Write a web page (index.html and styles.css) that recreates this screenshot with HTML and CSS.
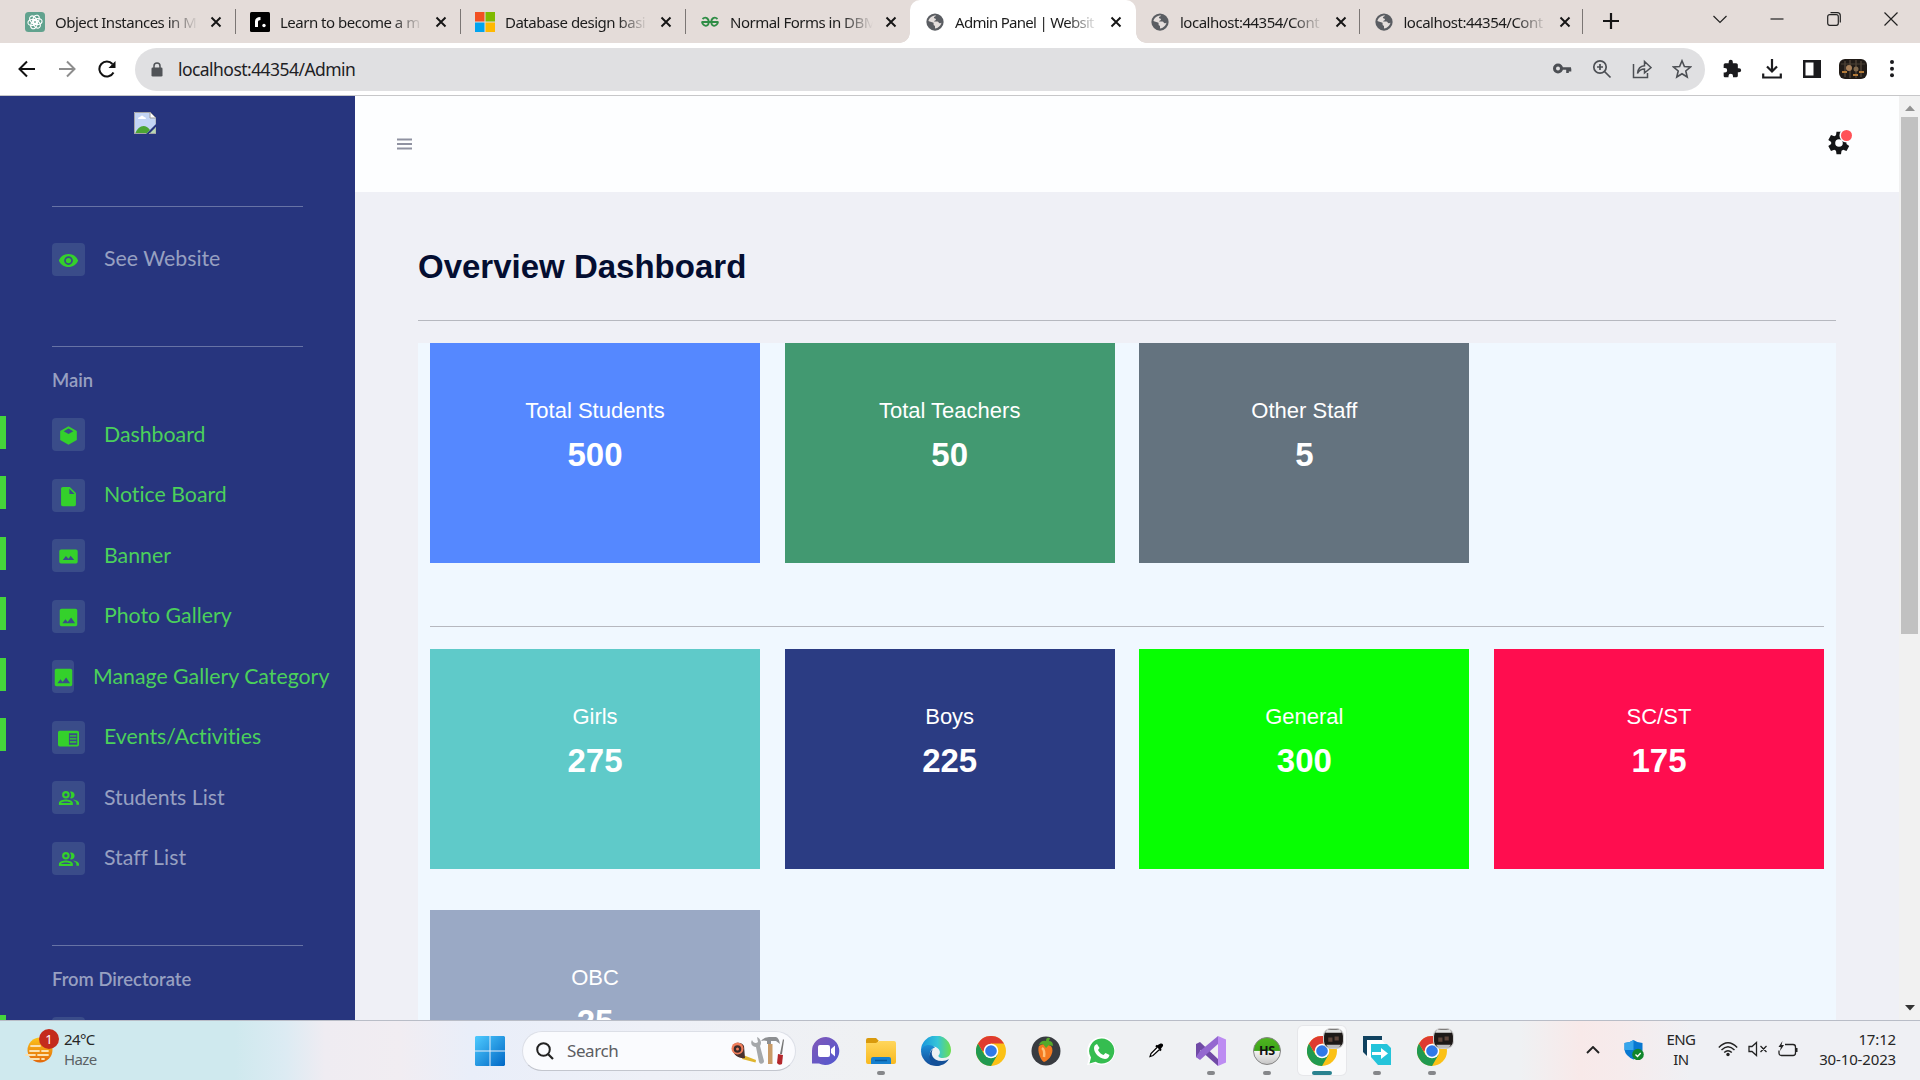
FILE: index.html
```html
<!DOCTYPE html>
<html lang="en">
<head>
<meta charset="utf-8">
<title>Admin Panel | Website</title>
<link rel="stylesheet" href="styles.css">
</head>
<body>
<svg class="defs" aria-hidden="true">
  <defs>
    <linearGradient id="winGrad" x1="0" y1="0" x2="1" y2="1"><stop offset="0" stop-color="#4fcbff"/><stop offset="1" stop-color="#0067c5"/></linearGradient>
    <linearGradient id="chatGrad" x1="0" y1="0" x2="1" y2="1"><stop offset="0" stop-color="#8258b8"/><stop offset="1" stop-color="#5058d0"/></linearGradient>
    <linearGradient id="folderGrad" x1="0" y1="0" x2="0" y2="1"><stop offset="0" stop-color="#ffd65c"/><stop offset="1" stop-color="#f8b91f"/></linearGradient>
    <linearGradient id="edgeTop" x1="0" y1="0" x2="1" y2="0"><stop offset="0" stop-color="#1795dd"/><stop offset=".55" stop-color="#35c5d8"/><stop offset="1" stop-color="#6ee04c"/></linearGradient>
    <linearGradient id="edgeLow" x1="0" y1="0" x2="0" y2="1"><stop offset="0" stop-color="#1c8fd8"/><stop offset="1" stop-color="#124a96"/></linearGradient>
    <linearGradient id="sunGrad" x1="0" y1="0" x2="0" y2="1"><stop offset="0" stop-color="#fcc419"/><stop offset="1" stop-color="#e3680b"/></linearGradient>
    <linearGradient id="hsGrad" x1="0" y1="0" x2="0" y2="1"><stop offset="0" stop-color="#4fb51f"/><stop offset=".48" stop-color="#3da51a"/><stop offset=".5" stop-color="#f4f4f4"/><stop offset="1" stop-color="#c4c4c4"/></linearGradient>
  </defs>
  <symbol id="globe" viewBox="0 0 24 24"><circle cx="12" cy="12" r="11.5" fill="#5a5d62"/><path d="M13.500 3.200c-1 1.600-2.800 1.300-3 2.800 .2 1.700 2.800.6 2.800 2.600 0 1.600-2.600 1.100-2.600 2.800h4.500c1.800 0 1.400 2.700 3.800 2.200l1.600-.6c-.7 3.600-4.400 7.500-8.600 7.500v-2.800c0-1.200-1.900-1-1.900-2.500v-2.300L5 11.400l-1.800-.8C4 6.500 8 3 13.500 3.200z" fill="#e4dedc"/></symbol>
  <symbol id="close" viewBox="0 0 12 12"><path d="M1.500 1.500l9 9M10.500 1.500l-9 9" stroke="#151515" stroke-width="1.900" fill="none"/></symbol>
  <symbol id="image" viewBox="0 0 24 24"><path d="M22 20V4c0-1.100-.9-2-2-2H4c-1.100 0-2 .9-2 2v16c0 1.100.9 2 2 2h16c1.100 0 2-.9 2-2zM8.500 14l2.500 3 4-5 4.500 6.500H5z"/></symbol>
  <symbol id="people" viewBox="0 0 24 24"><path d="M16.500 13.100c2.100 1 4.500 2 4.500 4.400V19h3v-1.700c0-2.600-4.500-3.900-7.500-4.200zM15 12c2.200 0 4-1.800 4-4s-1.800-4-4-4c-.5 0-.9.1-1.300.2A6 6 0 0 1 15 8a6 6 0 0 1-1.300 3.800c.4.100.8.200 1.300.2zM9 3.500a4.300 4.300 0 1 0 0 8.600 4.300 4.300 0 0 0 0-8.600zm0 6.200A1.900 1.900 0 1 1 9 5.900a1.900 1.900 0 0 1 0 3.800zM9 13c-2.700 0-8 1.300-8 4v2.500h16V17c0-2.700-5.300-4-8-4zm5.500 4h-11c.5-.7 3-1.500 5.500-1.500s5 .8 5.500 1.500z"/></symbol>
  <symbol id="chrome" viewBox="0 0 30 30"><circle cx="15" cy="15" r="15" fill="#fbc116"/><path d="M2 7.500A15 15 0 0 0 15 30l6.500-11.250L15 15 8.500 18.750z" fill="#219a50"/><path d="M2 7.500A15 15 0 0 1 28 7.500H15V15H6.500z" fill="#df3b30"/><circle cx="15" cy="15" r="7.300" fill="#fff"/><circle cx="15" cy="15" r="5.800" fill="#3079e8"/></symbol>
  <symbol id="avatar" viewBox="0 0 28 20"><rect width="28" height="20" rx="6" fill="#211b17"/><path d="M6 2v16M11 1v18M17 1v18M22 2v16" stroke="#625344" stroke-width="1"/><path d="M3 13h5M20 13h5M14 16h5" stroke="#b37a38" stroke-width="2"/><circle cx="10" cy="9" r="3" fill="#a98059"/><circle cx="17" cy="10" r="2.500" fill="#80684c"/><path d="M2 5h24" stroke="#4a4034"/></symbol>
  <symbol id="profile" viewBox="0 0 20 20"><rect x=".5" y=".5" width="19" height="19" rx="7" fill="#1d1917" stroke="#d0d0d0"/><path d="M4 1.500h12l2 3H2z" fill="#dedede"/><path d="M3 16h14l-2 3H5z" fill="#bdbdbd"/><path d="M5 9h4v4H5zM11 8h4v4h-4z" fill="#5d453a"/></symbol>
</svg>

<header class="tabs">
  <div class="tab">
    <svg class="fav" viewBox="0 0 20 20"><rect width="20" height="20" rx="3.500" fill="#61a28e"/><g fill="none" stroke="#fff" stroke-width="1.100"><ellipse cx="10" cy="7.200" rx="3" ry="4.300" transform="rotate(20 10 10)"/><ellipse cx="10" cy="7.200" rx="3" ry="4.300" transform="rotate(80 10 10)"/><ellipse cx="10" cy="7.200" rx="3" ry="4.300" transform="rotate(140 10 10)"/><ellipse cx="10" cy="7.200" rx="3" ry="4.300" transform="rotate(200 10 10)"/><ellipse cx="10" cy="7.200" rx="3" ry="4.300" transform="rotate(260 10 10)"/><ellipse cx="10" cy="7.200" rx="3" ry="4.300" transform="rotate(320 10 10)"/></g></svg>
    <span class="tab-title">Object Instances in M</span><svg class="x"><use href="#close"/></svg>
  </div>
  <div class="tab">
    <svg class="fav" viewBox="0 0 20 20"><rect width="20" height="20" rx="1.500"/><path d="M6.500 15V9.500Q6.500 6.500 10.500 6.500" fill="none" stroke="#fff" stroke-width="3"/><circle cx="14" cy="13.500" r="1.700" fill="#fff"/></svg>
    <span class="tab-title">Learn to become a m</span><svg class="x"><use href="#close"/></svg>
  </div>
  <div class="tab">
    <svg class="fav" viewBox="0 0 20 20"><path d="M0 0h9.500v9.500H0z" fill="#f25022"/><path d="M10.500 0H20v9.500h-9.500z" fill="#7fba00"/><path d="M0 10.500h9.500V20H0z" fill="#00a4ef"/><path d="M10.500 10.500H20V20h-9.500z" fill="#ffb900"/></svg>
    <span class="tab-title">Database design basi</span><svg class="x"><use href="#close"/></svg>
  </div>
  <div class="tab last">
    <svg class="fav" viewBox="0 0 20 20"><path d="M1.500 10h17M2.500 7C5.500 4 9 6.500 8.700 10.500S4 15.500 1.800 10M17.500 7C14.500 4 11 6.500 11.300 10.500s4.700 5 6.900-.5" fill="none" stroke="#2f8d46" stroke-width="1.800"/></svg>
    <span class="tab-title">Normal Forms in DBM</span><svg class="x"><use href="#close"/></svg>
  </div>
  <div class="tab active">
    <svg class="fav"><use href="#globe"/></svg>
    <span class="tab-title">Admin Panel | Websit</span><svg class="x"><use href="#close"/></svg>
  </div>
  <div class="tab slim">
    <svg class="fav"><use href="#globe"/></svg>
    <span class="tab-title">localhost:44354/Cont</span><svg class="x"><use href="#close"/></svg>
  </div>
  <div class="tab slim">
    <svg class="fav"><use href="#globe"/></svg>
    <span class="tab-title">localhost:44354/Cont</span><svg class="x"><use href="#close"/></svg>
  </div>
  <svg class="plus" viewBox="0 0 16 16"><path d="M8 0v16M0 8h16" stroke="#151515" stroke-width="2.200"/></svg>
  <div class="win">
    <svg viewBox="0 0 14 14"><path d="M.5 4l6.500 6.500L13.500 4" /></svg>
    <svg viewBox="0 0 14 14"><path d="M.5 7h13"/></svg>
    <svg viewBox="0 0 14 14"><rect x=".7" y="2.700" width="10.600" height="10.600" rx="2"/><path d="M3.500.7h6.800a3 3 0 0 1 3 3v6.800"/></svg>
    <svg viewBox="0 0 14 14"><path d="M.5.5l13 13M13.500.5l-13 13"/></svg>
  </div>
</header>

<div class="toolbar">
  <svg class="nav" viewBox="0 0 18 18"><path d="M17 9H2M9 1.500L1.500 9 9 16.500" stroke="#111"/></svg>
  <svg class="nav" viewBox="0 0 18 18"><path d="M1 9h15M9 1.500L16.500 9 9 16.500" stroke="#8d8d8d"/></svg>
  <svg class="nav" viewBox="0 0 18 18"><path d="M15.500 12.500A7.500 7.500 0 1 1 14.500 4" stroke="#111"/><path d="M17.500 1v7h-7z" fill="#111" stroke="none"/></svg>
  <div class="omnibox">
    <svg class="lock" viewBox="0 0 12 15"><rect x=".5" y="5.500" width="11" height="9" rx="1.300" fill="#505357"/><path d="M3 6V4a3 3 0 0 1 6 0v2" fill="none" stroke="#505357" stroke-width="1.500"/></svg>
    <span class="url">localhost:44354/Admin</span>
    <div class="omni-icons">
      <svg viewBox="0 0 20 20"><circle cx="6" cy="9.500" r="3.500" fill="none" stroke="#4c4f54" stroke-width="3"/><path d="M9 9.500h10M15.500 9.500v4.500M18 9.500v3" stroke="#4c4f54" stroke-width="2.600"/></svg>
      <svg viewBox="0 0 20 20"><g fill="none" stroke="#4c4f54" stroke-width="1.700"><circle cx="8" cy="8" r="6.200"/><path d="M12.500 12.500l6 6M8 5v6M5 8h6"/></g></svg>
      <svg viewBox="0 0 20 20"><g fill="none" stroke="#4c4f54" stroke-width="1.500"><path d="M1.500 5v13.500h14V14"/><path d="M5.500 14.500c.5-5 3-7.500 7-7.700V2.500l6.500 6-6.500 5.500v-4c-3.500 0-5.500 1.500-7 4.500z"/></g></svg>
      <svg viewBox="0 0 20 20"><path d="M10 1.800l2.400 5.700 6 .5-4.600 4 1.400 6L10 14.800 4.800 18l1.400-6-4.600-4 6-.5z" fill="none" stroke="#4c4f54" stroke-width="1.600"/></svg>
    </div>
  </div>
  <div class="ext">
    <svg viewBox="0 0 24 24"><path d="M20.500 11H19V7c0-1.100-.9-2-2-2h-4V3.500a2.500 2.500 0 0 0-5 0V5H4a2 2 0 0 0-2 2v3.800h1.500a2.700 2.700 0 0 1 0 5.400H2V20c0 1.100.9 2 2 2h3.800v-1.500a2.700 2.700 0 0 1 5.400 0V22H17a2 2 0 0 0 2-2v-4h1.500a2.500 2.500 0 0 0 0-5z" fill="#1b1b1e"/></svg>
    <svg viewBox="0 0 20 20"><path d="M10 0v12M5 7.500l5 5 5-5M1.200 14.500v4h17.600v-4" fill="none" stroke="#1b1b1e" stroke-width="2.200"/></svg>
    <svg viewBox="0 0 20 20"><path d="M1 1h18v18H1zM3.500 3.500v13h8v-13z" fill="#1b1b1e" fill-rule="evenodd"/></svg>
    <svg class="wide"><use href="#avatar"/></svg>
    <svg viewBox="0 0 20 20"><g fill="#1b1b1e"><circle cx="10" cy="3" r="2"/><circle cx="10" cy="9.700" r="2"/><circle cx="10" cy="16.300" r="2"/></g></svg>
  </div>
</div>

<div class="page">
  <aside class="sidebar">
    <svg class="broken" viewBox="0 0 22 22"><path d="M0 0h16l6 6v6L12 22H0z" fill="#c3d5f5"/><path d="M22 15v7h-7z" fill="#b9d8b3"/><path d="M1 22c3-8 10-11 15-4l-4 4z" fill="#4ba534"/><path d="M4 7q0-2 2-2 2-3 4 0 2 0 2 2z" fill="#fff"/><path d="M16 0v6h6z" fill="#fff" stroke="#9a9a9a"/><path d="M.5 22V.5H16M22 6v6M.5 21.500H12M22 15v6.500h-7" fill="none" stroke="#a5a5a5"/></svg>
    <hr>
    <ul class="menu first">
      <li><span class="box"><svg viewBox="0 0 24 24"><path d="M12 4.500C7 4.500 2.700 7.600 1 12c1.700 4.400 6 7.500 11 7.500s9.300-3.100 11-7.500c-1.700-4.400-6-7.500-11-7.500zM12 17a5 5 0 1 1 0-10 5 5 0 0 1 0 10zm0-8a3 3 0 1 0 0 6 3 3 0 0 0 0-6z"/></svg></span>See Website</li>
    </ul>
    <hr>
    <h2>Main</h2>
    <ul class="menu">
      <li class="on"><span class="box"><svg viewBox="0 0 24 24"><path d="M12 1.500l9.500 5.300v10.400L12 22.500l-9.500-5.300V6.800zM12 4L6.500 7.200 12 10.300l5.500-3.100z" fill-rule="evenodd"/></svg></span>Dashboard</li>
      <li class="on"><span class="box"><svg viewBox="0 0 24 24"><path d="M5.500 1C4.400 1 3.500 2 3.500 3v18c0 1.100.9 2 2 2h13c1.100 0 2-.9 2-2V8l-7-7zm7.500 8V3L19 9z"/></svg></span>Notice Board</li>
      <li class="on"><span class="box"><svg viewBox="0 0 24 24"><path d="M3.500 4h17a2 2 0 0 1 2 2v12a2 2 0 0 1-2 2h-17a2 2 0 0 1-2-2V6a2 2 0 0 1 2-2zm2 12h13l-4-5-2.500 3.500-3-3z" fill-rule="evenodd"/></svg></span>Banner</li>
      <li class="on"><span class="box"><svg><use href="#image"/></svg></span>Photo Gallery</li>
      <li class="on"><span class="box narrow"><svg><use href="#image"/></svg></span>Manage Gallery Category</li>
      <li class="on"><span class="box"><svg viewBox="0 0 24 24"><path d="M2 3h20q2 0 2 2v14q0 2-2 2H2q-2 0-2-2V5q0-2 2-2zm10.500 3v13H22V6z" fill-rule="evenodd"/><path d="M13.500 9H21M13.500 12.500H21M13.500 16H21" stroke="#34d12b" stroke-width="1.500"/></svg></span>Events/Activities</li>
      <li><span class="box"><svg><use href="#people"/></svg></span>Students List</li>
      <li><span class="box"><svg><use href="#people"/></svg></span>Staff List</li>
    </ul>
    <hr>
    <h2>From Directorate</h2>
    <ul class="menu">
      <li class="on"><span class="box"></span></li>
    </ul>
  </aside>
  <main class="main">
    <div class="topbar">
      <svg class="burger" viewBox="0 0 15 12"><path d="M0 1.500h15M0 6h15M0 10.500h15" stroke="#8f92a1" stroke-width="1.800"/></svg>
      <div class="gear">
        <svg viewBox="0 0 24 24"><path d="M19.430 12.980c.04-.32.070-.64.070-.98s-.03-.66-.07-.98l2.800-2.100-2.700-4.900-3.300 1.200c-.5-.4-1.100-.7-1.700-.95L14 .8h-4.500L9 4.270c-.6.25-1.200.57-1.700.95L4 4 1.300 8.900l2.900 2.120c-.04.32-.07.65-.07.98s.03.66.07.980L1.300 15.100 4 20l3.300-1.220c.5.400 1.100.7 1.700.95l.5 3.500H14l.53-3.500c.6-.25 1.200-.56 1.700-.95L19.500 20l2.700-4.900zM12 15.800a3.800 3.800 0 1 1 0-7.600 3.800 3.800 0 0 1 0 7.600z" fill="#131416"/></svg>
        <i class="dot"></i>
      </div>
    </div>
    <div class="content">
      <h1>Overview Dashboard</h1>
      <hr>
      <section class="panel">
        <div class="cards">
          <div class="card blue"><span>Total Students</span><b>500</b></div>
          <div class="card green"><span>Total Teachers</span><b>50</b></div>
          <div class="card gray"><span>Other Staff</span><b>5</b></div>
        </div>
        <hr>
        <div class="cards">
          <div class="card teal"><span>Girls</span><b>275</b></div>
          <div class="card navy"><span>Boys</span><b>225</b></div>
          <div class="card lime"><span>General</span><b>300</b></div>
          <div class="card red"><span>SC/ST</span><b>175</b></div>
          <div class="card slate"><span>OBC</span><b>25</b></div>
        </div>
      </section>
    </div>
  </main>
  <div class="scroll">
    <svg viewBox="0 0 10 6"><path d="M0 6l5-5.500L10 6z" fill="#929292"/></svg>
    <div class="thumb"></div>
    <svg class="down" viewBox="0 0 10 6"><path d="M0 0h10L5 5.500z" fill="#333"/></svg>
  </div>
</div>

<footer class="taskbar">
  <div class="weather">
    <div class="sun">
      <svg viewBox="0 0 30 30"><circle cx="16" cy="16" r="12.500" fill="url(#sunGrad)"/><path d="M7 12h10M6 17h18M2 21h22M6 25h14" stroke="#fbe1b0" stroke-width="1.800" stroke-dasharray="9 3 12 3" stroke-linecap="round"/></svg>
      <span class="count">1</span>
    </div>
    <div class="w-text"><span>24°C</span><small>Haze</small></div>
  </div>
  <div class="apps">
    <svg class="start" viewBox="0 0 30 30"><path d="M1 0h13.500v14.500H0V1zM15.500 0H29l1 1v13.500H15.500zM0 15.500h14.500V30H1l-1-1zM15.500 15.500H30V29l-1 1H15.500z" fill="url(#winGrad)"/></svg>
    <div class="search">
      <svg class="mag" viewBox="0 0 18 18"><circle cx="7.500" cy="7.500" r="6.300" fill="none" stroke="#222" stroke-width="2"/><path d="M12 12l5 5" stroke="#222" stroke-width="2.200"/></svg>
      <span>Search</span>
      <svg class="tools" viewBox="0 0 56 30"><path d="M13 19l13 5-.5 2.500L12 23z" fill="#dfb52e"/><path d="M2 12c1-6 9-7 12-2l1 12c-5 1-12-2-13-10z" fill="#4a322f"/><circle cx="7.500" cy="12.500" r="6" fill="#ef7d5b"/><circle cx="7.500" cy="13" r="3.800" fill="#3c2a2a"/><circle cx="7.500" cy="13" r="1.500" fill="#ef7d5b"/><path d="M22 4c1 3 4 4 6 2l-1-5c4 2 5 6 3 9l4 15c0 3-4 4-5 1L26 11c-4 0-6-4-4-7z" fill="#a5a8ab"/><path d="M31 5q3-4 8-4h7q3 1 4 7l-4-3h-5v3h-4V5q-3-1-6 0z" fill="#8d8f92"/><path d="M38 8h4.500v20H38z" fill="#c99a66"/><path d="M53 3l1 1-2 14h-2z" fill="#777"/><path d="M48 18l5 1-1 9q-3 2-5-1z" fill="#b3262b"/></svg>
    </div>
    <div class="app"><svg viewBox="0 0 30 30"><path d="M15 1a14 14 0 1 1-7 26.500H1V15A14 14 0 0 1 15 1z" fill="url(#chatGrad)"/><rect x="7" y="9" width="12" height="12" rx="2" fill="#fff"/><path d="M20 13l4-3.500v11L20 17z" fill="#fff"/></svg></div>
    <div class="app run"><svg viewBox="0 0 30 30"><path d="M0 4q0-2 2-2h8l3 3h-1v4H0z" fill="#d99a0c"/><path d="M0 7h10l3-2h15q2 0 2 2v19q0 2-2 2H2q-2 0-2-2z" fill="url(#folderGrad)"/><path d="M5 28v-5q0-2 2-2h16q2 0 2 2v5z" fill="#1580cf"/><path d="M9 24.500h12" stroke="#075a9e" stroke-width="1.500"/></svg></div>
    <div class="app"><svg viewBox="0 0 30 30"><path d="M0 15a15 15 0 0 1 30-1c0 5-3 8-8 8-3 0-5-1-4.500-2.500 3-3 1-8-5-9C7 10 2 12 0 15z" fill="url(#edgeTop)"/><path d="M0 15c1-6 9-8 14-3.500-4 1-6 5-5 9 1 5 6 8 11 8.500A15 15 0 0 1 0 15z" fill="url(#edgeLow)"/><path d="M12 13c-3 4-1 12 9 12 3 0 5-1 7-2-3 5-8 7-13 7-7-2-9-13-3-17z" fill="#135098"/></svg></div>
    <div class="app"><svg><use href="#chrome"/></svg></div>
    <div class="app"><svg viewBox="0 0 30 30"><circle cx="15" cy="15" r="14.500" fill="#383b40"/><path d="M8 10q5-4 12 0c4 5-1 14-7 16-4-2-7-12-5-16z" fill="#f47a20"/><path d="M11 12q3 2 2 9" stroke="#ffc078" stroke-width="2.500" fill="none"/><path d="M8 9q2-5 7-4 0-4 4-3l-1 3q4 0 4 5l-4-1-3 3-3-4z" fill="#55a92b"/></svg></div>
    <div class="app"><svg viewBox="0 0 30 30"><path d="M15 1a14 14 0 1 1-6.500 26.300L1 29.300l2-7.300A14 14 0 0 1 15 1z" fill="#fff"/><path d="M15.500 2.500a12.500 12.500 0 1 1-6 23.300L3.500 27.500l1.500-6A12.500 12.500 0 0 1 15.500 2.500z" fill="#35bd50"/><path d="M11 8l2.500 4-1.500 2q2 4 5.500 5l2-2 4 2q-1 4-4.500 4C13 22.500 8 17 8 12q0-3 3-4z" fill="#fff"/></svg></div>
    <div class="app"><svg viewBox="0 0 30 30"><path d="M15 10l4.500-2.500q3-.5 2.500 2.500L19 14z" fill="#000"/><path d="M15 9.500l5 5" stroke="#000" stroke-width="2"/><path d="M16 11.500l-6 6-1 3 3-1 6.500-6" fill="#fff" stroke="#000" stroke-width="1.200"/></svg></div>
    <div class="app run"><svg viewBox="0 0 30 30"><path d="M0 8l4-2 18 17v7L4 14v9l-4-2z" fill="#704aa6"/><path d="M0 21l4 3L22 8V0L4 15z" fill="#9468d0"/><path d="M22 0l8 3.500v23L22 30z" fill="#bd8cf2"/></svg></div>
    <div class="app run"><svg viewBox="0 0 30 30"><circle cx="15" cy="15" r="13.500" fill="url(#hsGrad)" stroke="#858585"/><text x="15" y="19" class="hs">HS</text></svg></div>
    <div class="app run current"><svg><use href="#chrome"/></svg><svg class="badge"><use href="#profile"/></svg></div>
    <div class="app run"><svg viewBox="0 0 30 30"><path d="M1 0h19v4H5v16l-4-4z" fill="#10425f"/><path d="M5 4h15l3 4H9v16l-4-4z" fill="#fff"/><path d="M9 8h16l4 4v17H16l-7-8z" fill="#24c4da"/><path d="M10 16h9v-4l7 5.500-7 5.500v-4h-9z" fill="#fff"/></svg></div>
    <div class="app run"><svg><use href="#chrome"/></svg><svg class="badge"><use href="#profile"/></svg></div>
  </div>
  <div class="tray">
    <svg class="chev" viewBox="0 0 14 8"><path d="M1 7l6-6 6 6" fill="none" stroke="#222" stroke-width="1.900"/></svg>
    <svg class="shield" viewBox="0 0 20 20"><path d="M9.500 0q4 3 9 3v7q-1 6-9 9.500Q1.500 16 .5 10V3q5 0 9-3z" fill="#0878d1"/><path d="M9.500 0v10H.5V3q5 0 9-3z" fill="#36a6ec"/><circle cx="14" cy="14.500" r="5.800" fill="#11862b"/><path d="M11.500 14.500l2 2 3.200-3.500" fill="none" stroke="#fff" stroke-width="1.300"/></svg>
    <div class="lang"><span>ENG</span><span>IN</span></div>
    <svg class="wifi" viewBox="0 0 20 16"><g fill="none" stroke="#222" stroke-width="1.400"><path d="M.8 6.500Q10-3 19.200 6.500M3.500 9q6.500-6.500 13 0M6.200 11.500q3.800-3.700 7.600 0"/></g><circle cx="10" cy="13.500" r="1.700" fill="#222"/></svg>
    <svg class="vol" viewBox="0 0 20 16"><path d="M1 5.500h3L8.500 1.500v13L4 10.500H1zM12.500 5l6 6M18.500 5l-6 6" fill="none" stroke="#222" stroke-width="1.300"/></svg>
    <svg class="bat" viewBox="0 0 20 16"><path d="M7 3.500h8q2.500 0 2.500 2.500v6q0 2.500-2.500 2.500H3.500Q1 14.500 1 12V9.500" fill="none" stroke="#222" stroke-width="1.300"/><path d="M18 7h1.500v4H18zM4.500 0L.5 6h2.300L2 10l4-6H3.500z" fill="#222"/></svg>
    <div class="clock"><span>17:12</span><span>30-10-2023</span></div>
  </div>
</footer>
</body>
</html>
```
FILE: styles.css
```css
* { box-sizing: border-box; }
body { margin: 0; width: 1920px; height: 1080px; overflow: hidden; display: flex; flex-direction: column; font-family: "Liberation Sans", Arial, sans-serif; }
svg { display: block; flex: none; }
.defs { position: absolute; width: 0; height: 0; }
hr { border: 0; margin: 0; height: 1px; }
ul { list-style: none; margin: 0; padding: 0; }

/* browser tabs */
.tabs { height: 43px; flex: none; background: #e4dcd9; display: flex; align-items: stretch; padding-left: 11px; font: 15px/20px "Noto Sans", sans-serif; letter-spacing: -.5px; color: #1c1c1c; }
.tab { width: 225px; display: flex; align-items: center; padding-left: 14px; position: relative; }
.tab:not(.active):not(.last)::after { content: ""; position: absolute; right: 0; top: 9px; width: 1px; height: 25px; background: #7b7674; }
.tab.slim { width: 223.500px; }
.tab.active { background: #fff; border-radius: 10px 10px 0 0; letter-spacing: -.7px; margin-left: -1px; width: 226px; padding-left: 15px; }
.tab.active::before, .tab.active::after { content: ""; position: absolute; bottom: 0; width: 10px; height: 10px; }
.tab.active::before { left: -10px; background: radial-gradient(circle at 0 0, transparent 9.500px, #fff 10px); }
.tab.active::after { right: -10px; background: radial-gradient(circle at 100% 0, transparent 9.500px, #fff 10px); }
.fav { width: 20px; height: 20px; }
.active .fav, .slim .fav { height: 18px; width: 20px; }
.tab-title { width: 145px; margin: 0 -5px 0 10px; white-space: nowrap; -webkit-mask-image: linear-gradient(90deg, #000 112px, transparent 143px); mask-image: linear-gradient(90deg, #000 112px, transparent 143px); }
.x { width: 12px; height: 12px; margin-left: 15px; }
.plus { width: 16px; height: 16px; margin: 13px 0 0 20px; }
.win { display: flex; gap: 43px; margin: 12px 22px 0 auto; }
.win svg { width: 14px; height: 14px; fill: none; stroke: #222; stroke-width: 1.200; }

/* address bar */
.toolbar { height: 53px; flex: none; background: #fff; border-bottom: 1px solid #c7c7c9; display: flex; align-items: center; padding: 0 20px 0 18px; }
.nav { width: 18px; height: 18px; margin-right: 22px; fill: none; stroke-width: 2; }
.omnibox { width: 1570px; height: 43px; margin-left: -3px; border-radius: 22px; background: #e0e0e2; display: flex; align-items: center; padding: 0 13px 0 16px; }
.lock { width: 12px; height: 15px; }
.url { margin-left: 15px; font: 17.500px/24px "Noto Sans", sans-serif; letter-spacing: -.55px; color: #202124; }
.omni-icons { margin-left: auto; display: flex; gap: 20px; }
.omni-icons svg { width: 20px; height: 20px; }
.ext { margin-left: auto; display: flex; align-items: center; gap: 20px; margin-right: -2px; }
.ext svg { width: 20px; height: 20px; }
.ext svg.wide { width: 28px; margin: 0 -5px 0 -3px; }

.page { height: 924px; flex: none; display: flex; overflow: hidden; }

/* sidebar */
.sidebar { width: 355px; flex: none; background: #27357e; color: #97a0c1; font-family: Lato, sans-serif; font-variant-ligatures: none; }
.sidebar hr { width: 251px; margin-left: 52px; background: #6773a5; }
.broken { width: 22px; height: 22px; margin: 16px 0 72px 134px; }
.menu { font-size: 21.300px; line-height: 26px; fill: #34d12b; }
.menu li { height: 60.500px; display: flex; align-items: center; padding: 0 0 2px 52px; position: relative; white-space: nowrap; }
.menu .on { color: #4bd05b; }
.menu .on::before { content: ""; position: absolute; left: 0; top: 11px; width: 6px; height: 33px; background: #45d53c; }
.menu.first { padding: 22px 0 56px; }
.box { width: 33px; height: 33px; margin: 2px 19px 0 0; border-radius: 4px; background: #3a4c89; display: flex; align-items: center; justify-content: center; flex: none; }
.box.narrow { width: 22px; }
.box svg { width: 21px; height: 21px; margin-top: 2px; }
.sidebar h2 { margin: 0 0 0 52px; padding: 19px 0 11px; font-size: 18.400px; line-height: 28px; font-weight: 600; }
.menu:not(.first) + hr { margin-top: 56px; }

/* main column */
.main { flex: 1; background: #eff0f6; min-width: 0; }
.topbar { height: 96px; background: #fdfeff; display: flex; align-items: center; justify-content: space-between; padding: 0 47px 0 42px; }
.burger { width: 15px; height: 12px; }
.gear { position: relative; width: 25px; height: 24px; margin-top: -3px; }
.gear svg { width: 24px; height: 24px; }
.dot { position: absolute; right: 0; top: -1px; width: 11px; height: 11px; border-radius: 50%; background: #ff5257; box-shadow: 0 0 0 1.500px #fdfeff; }
.content { padding: 55px 63px 0 63px; }
h1 { margin: 0; font-size: 33px; line-height: 40px; color: #040e31; }
.content hr { background: #b6b8bf; }
.content > hr { margin: 33px 0 22px; }
.panel { background: #f0f8ff; padding: 0 12px; height: 700px; }
.panel hr { margin: 63px 0 22px; }
.cards { display: grid; grid-template-columns: repeat(4, 1fr); column-gap: 24.600px; row-gap: 41px; }
.card { height: 220px; color: #fff; display: flex; flex-direction: column; align-items: center; padding-top: 54px; font-size: 22px; line-height: 28px; }
.card b { font-size: 33px; line-height: 40px; margin-top: 10px; }
.blue { background: #5588ff; } .green { background: #429971; } .gray { background: #64737f; } .teal { background: #5fcac9; }
.navy { background: #2b3c83; } .lime { background: #07fe02; } .red { background: #ff0d4f; } .slate { background: #9aa9c5; }

.scroll { width: 21px; background: #f1f1f1; display: flex; flex-direction: column; align-items: center; padding: 9px 0 9px; }
.scroll svg { width: 10px; height: 6px; }
.thumb { width: 17px; height: 517px; margin-top: 6px; background: #c1c1c1; }
.scroll .down { margin-top: auto; }

/* taskbar */
.taskbar { height: 60px; flex: none; border-top: 1px solid #b9bdc7; display: flex; align-items: center; font: 15px/20px "Noto Sans", sans-serif; letter-spacing: -.15px; color: #262626; background: linear-gradient(90deg, #cfe9ee 0, #cfe9ee 235px, #dcebf3 285px, #efecf2 325px, #f1edf2 400px, #e9eef9 470px, #eef0f7 650px, #eff1f3 880px, #eff1f3 1520px, #f8e9e9 1580px, #f6ebec 1620px, #eff0f4 1690px, #eff0f4 100%); }
.weather { width: 475px; display: flex; align-items: center; padding-left: 24px; }
.sun { position: relative; width: 30px; height: 30px; margin: -4px 10px 0 0; }
.sun svg { width: 30px; height: 30px; }
.count { position: absolute; left: 15px; top: -5px; width: 20px; height: 20px; border-radius: 50%; background: #c42b1c; color: #fff; text-align: center; font-size: 13px; }
.w-text { display: flex; flex-direction: column; letter-spacing: -.6px; padding-bottom: 3px; }
.w-text small { font-size: 15px; color: #5b6265; }
.apps { display: flex; align-items: center; }
.start { width: 30px; height: 30px; }
.search { width: 274px; height: 40px; margin-left: 17px; border-radius: 20px; background: #fafbfe; border: 1px solid #dcdfe7; border-bottom-color: #c3c6ce; display: flex; align-items: center; padding: 0 9px 0 13px; font-size: 17px; letter-spacing: -.4px; color: #5c5d61; }
.mag { width: 18px; height: 18px; margin-right: 13px; }
.tools { width: 56px; height: 30px; margin-left: auto; }
.app { width: 48px; height: 49px; margin-left: 7.150px; display: flex; align-items: center; justify-content: center; position: relative; }
.search + .app { margin-left: 5.500px; }
.app svg { width: 30px; height: 30px; }
.app .badge { position: absolute; right: 2px; top: 2px; width: 21px; height: 21px; }
.run::after { content: ""; position: absolute; left: 20px; bottom: 0; width: 8px; height: 4px; border-radius: 2px; background: #85878a; }
.current { background: #fafbfc; border-radius: 5px; box-shadow: 0 0 0 1px #e6e7ea; }
.current::after { left: 14px; width: 20px; background: #29828f; }
.hs { font: 700 12.500px "Open Sans", sans-serif; text-anchor: middle; fill: #111; }
.tray { margin-left: auto; display: flex; align-items: center; padding-right: 24px; }
.chev { width: 14px; height: 8px; margin: -2px 24px 0 0; }
.shield { width: 20px; height: 20px; margin: -1px 21px 0 0; }
.lang, .clock { display: flex; flex-direction: column; padding-bottom: 3px; }
.lang { width: 32px; align-items: center; margin-right: 21px; letter-spacing: -.6px; }
.wifi, .vol, .bat { width: 20px; height: 16px; margin-top: -3px; }
.vol { margin-left: 10px; margin-right: 10px; }
.clock { width: 90px; align-items: flex-end; margin-left: 8px; }
```
